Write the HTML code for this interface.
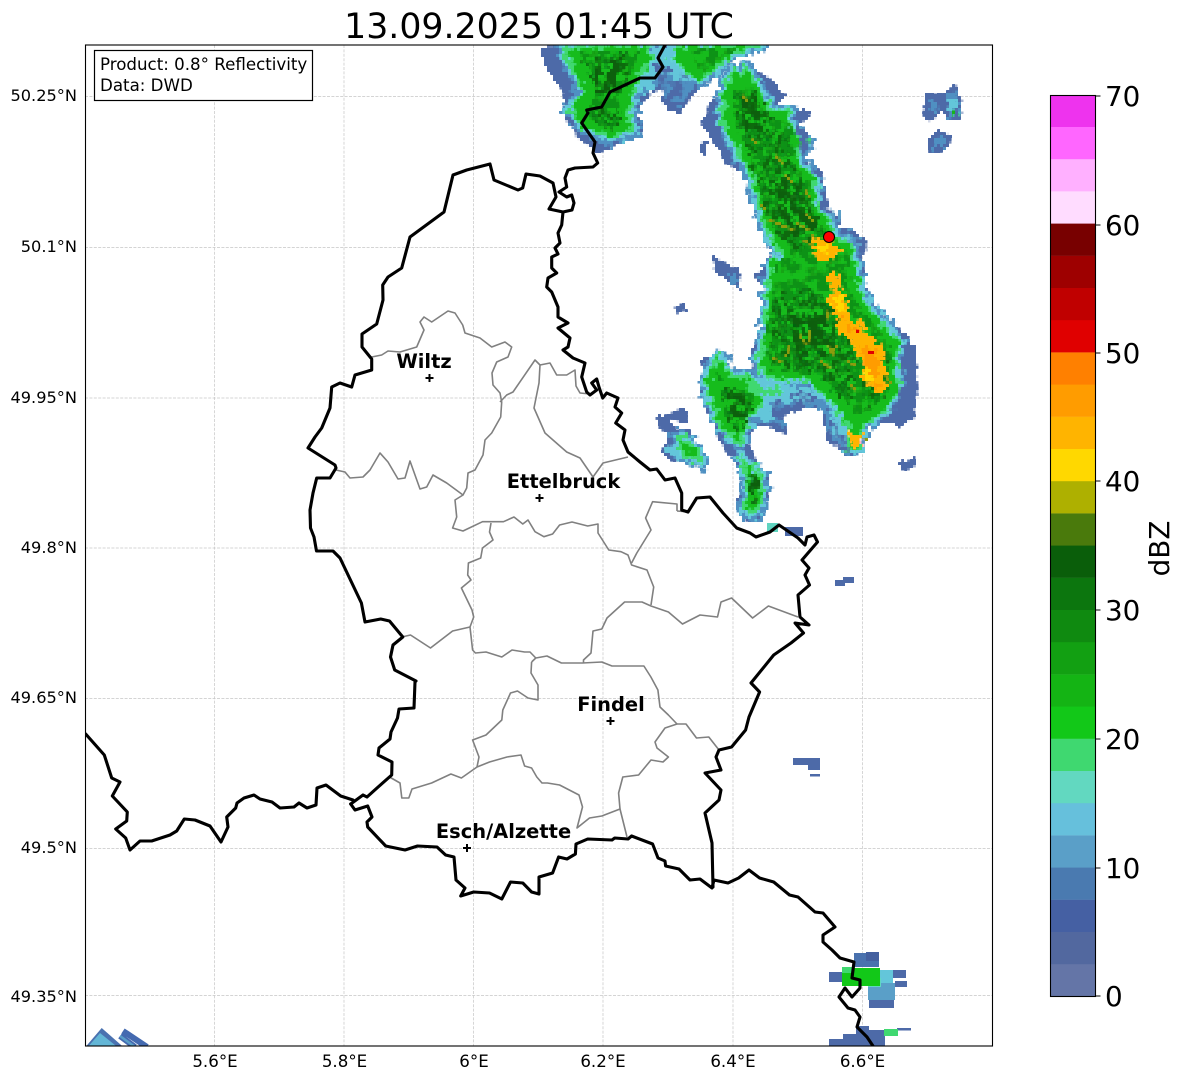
<!DOCTYPE html>
<html lang="en"><head><meta charset="utf-8"><title>13.09.2025 01:45 UTC</title>
<style>html,body{margin:0;padding:0;background:#fff;width:1184px;height:1081px;overflow:hidden}svg{display:block}text{font-family:"DejaVu Sans",sans-serif;fill:#000}</style></head>
<body>
<svg xmlns="http://www.w3.org/2000/svg" width="1184" height="1081" viewBox="0 0 1184 1081">
<defs>
<clipPath id="ax"><rect x="85.5" y="45" width="907" height="1001"/></clipPath>
<filter id="jag" filterUnits="userSpaceOnUse" x="85" y="45" width="908" height="1001">
<feTurbulence type="fractalNoise" baseFrequency="0.09" numOctaves="2" seed="4" result="n"/>
<feDisplacementMap in="SourceGraphic" in2="n" scale="9" xChannelSelector="R" yChannelSelector="G"/>
</filter>
<filter id="jag2" filterUnits="userSpaceOnUse" x="85" y="45" width="908" height="1001">
<feTurbulence type="fractalNoise" baseFrequency="0.13" numOctaves="3" seed="11" result="n"/>
<feDisplacementMap in="SourceGraphic" in2="n" scale="16" xChannelSelector="R" yChannelSelector="G"/>
</filter>
<filter id="jag3" filterUnits="userSpaceOnUse" x="85" y="45" width="908" height="1001">
<feTurbulence type="fractalNoise" baseFrequency="0.17" numOctaves="3" seed="23" result="n"/>
<feDisplacementMap in="SourceGraphic" in2="n" scale="14" xChannelSelector="G" yChannelSelector="R"/>
</filter>
<filter id="mott" filterUnits="userSpaceOnUse" x="85" y="45" width="908" height="1001">
<feTurbulence type="fractalNoise" baseFrequency="0.16" numOctaves="2" seed="9" result="n"/>
<feColorMatrix in="n" type="matrix" values="0 0 0 0 0 0 0 0 0 0 0 0 0 0 0 7 0 0 0 -3.1" result="t"/>
<feComposite in="SourceGraphic" in2="t" operator="in"/>
</filter>
<filter id="mott2" filterUnits="userSpaceOnUse" x="85" y="45" width="908" height="1001">
<feTurbulence type="fractalNoise" baseFrequency="0.11" numOctaves="3" seed="31" result="n"/>
<feColorMatrix in="n" type="matrix" values="0 0 0 0 0 0 0 0 0 0 0 0 0 0 0 7 0 0 0 -2.9" result="t"/>
<feComposite in="SourceGraphic" in2="t" operator="in"/>
</filter>
<filter id="px" filterUnits="userSpaceOnUse" primitiveUnits="userSpaceOnUse" x="85" y="45" width="908" height="1001">
<feFlood x="86" y="46" width="1" height="1" flood-color="#000"/>
<feComposite width="3" height="3"/>
<feTile result="a"/>
<feComposite in="SourceGraphic" in2="a" operator="in"/>
<feMorphology operator="dilate" radius="1"/>
</filter>
<g id="core">
<polygon points="730,75 747,68 763,95 770,110 790,112 790,128 808,142 795,158 815,178 816,202 826,215 837,238 851,242 856,265 860,285 865,302 878,317 900,342 896,360 899,390 890,405 878,418 863,423 860,447 848,450 848,427 837,410 827,397 807,380 767,380 758,360 765,337 767,300 770,262 783,255 773,242 760,212 750,172 740,158 722,122 722,95"/>
<polygon points="712,363 720,355 730,377 750,377 765,400 750,420 740,443 723,430 705,387"/>
<polygon points="740,457 763,477 762,493 757,513 743,510 747,493 747,477"/>
<polygon points="564,47 650,45 652,60 640,75 634,95 630,108 633,132 610,138 583,127 570,110 585,90 572,70"/>
<polygon points="680,45 763,45 735,53 712,72 700,82 685,70 672,60"/>
<polygon points="677,437 690,440 703,462 680,453"/>
</g>
</defs>
<rect width="1184" height="1081" fill="#fff"/>

<!-- grid -->
<g stroke="#c6c6c6" stroke-width="0.7" stroke-dasharray="3 1.4" fill="none">
<path d="M214.5 45V1046M344 45V1046M473.5 45V1046M603 45V1046M733 45V1046M862.5 45V1046"/>
<path d="M85 96.5H993M85 247.5H993M85 398H993M85 548H993M85 698.5H993M85 848.5H993M85 995.5H993"/>
</g>

<!-- radar -->
<g clip-path="url(#ax)">
<g filter="url(#px)">
<g filter="url(#jag)">
<g fill="#4d6aa8">
<polygon points="746,63 763,73 787,95 778,107 810,113 797,128 812,142 800,155 820,173 826,185 826,208 840,218 840,228 852,228 867,242 862,258 865,285 877,312 895,322 907,337 915,352 917,393 915,417 900,427 880,420 867,428 860,453 845,455 843,447 827,440 823,413 833,405 803,408 783,415 787,433 770,427 750,430 747,443 757,462 768,477 768,497 760,523 740,518 738,503 745,480 740,470 722,443 712,420 700,387 707,373 702,360 720,352 733,373 753,367 752,350 763,333 763,310 767,287 752,275 770,258 783,262 770,247 757,212 750,178 725,162 717,145 702,125 707,107 717,95 730,72"/>
<polygon points="543,45 763,47 733,55 717,75 693,95 680,115 668,108 660,98 663,85 655,90 633,112 645,128 623,142 600,152 583,143 567,122 563,92 550,75 540,55"/>
<polygon points="927,93 937,93 943,95 955,83 963,100 960,120 948,120 943,110 937,117 927,122 923,113 927,103"/>
<polygon points="938,129 952,138 947,148 930,153 928,142"/>
<polygon points="713,252 730,267 740,268 742,290 728,282 715,270"/>
<polygon points="702,143 708,142 703,155 698,153"/>
<polygon points="673,308 683,305 688,312 677,313"/>
<polygon points="657,417 680,409 688,412 687,423 672,420 673,430 690,430 705,462 698,465 683,457 675,462 660,452 670,437 658,423"/>
<polygon points="898,462 917,457 917,468 903,470"/>
</g>
</g>
<g filter="url(#jag3)">
<g fill="#4f90c2">
<polygon points="550,50 562,50 572,80 578,115 592,137 606,147 632,132 640,122 628,108 660,85 668,98 680,106 690,90 712,72 730,55 700,58 670,50"/>
<polygon points="735,378 770,378 830,398 826,412 800,404 782,412 785,428 770,422 752,425 745,440 730,420"/>
<polygon points="826,408 848,425 850,450 835,440 828,430"/>
<polygon points="945,97 955,90 960,105 955,116 948,115"/>
<polygon points="932,100 938,100 937,112 930,115"/>
<polygon points="935,135 947,140 942,147 934,148"/>
<polygon points="728,272 738,276 738,286 730,280"/>
</g>
</g>
<g filter="url(#jag2)">
<use href="#core" fill="#4f90c2" stroke="#4f90c2" stroke-width="13" stroke-linejoin="round"/>
<use href="#core" fill="#63c6da" stroke="#63c6da" stroke-width="8" stroke-linejoin="round"/>
<g fill="#63c6da">
<polygon points="650,47 682,47 700,74 688,82 672,78 662,70 645,95 640,70"/>
<polygon points="752,380 775,382 815,392 828,396 812,400 785,402 770,408 775,420 755,418 748,430"/>
<polygon points="830,412 845,430 842,440 832,435"/>
<polygon points="665,450 675,440 680,455 672,458"/>
<polygon points="948,100 954,98 956,110 950,110"/>
</g>
<use href="#core" fill="#14bc1c" stroke="#3fd870" stroke-width="3" stroke-linejoin="round"/>
</g>
<g filter="url(#jag3)">
<g fill="#3fd870">
<polygon points="765,388 780,386 782,394 768,396"/>
<polygon points="745,380 756,378 760,388 750,392"/>
</g>
<rect x="953" y="111" width="5" height="5" fill="#12b41a"/>
</g>
<!-- blue patches breaking up the cyan rim -->
<g filter="url(#mott2)">
<g fill="#4d6aa8">
<polygon points="652,62 672,68 690,78 682,98 668,104 660,88"/>
<polygon points="772,402 800,390 818,397 802,410 783,416 788,434 770,428"/>
<polygon points="828,418 846,430 850,454 834,447"/>
<polygon points="903,345 916,352 918,395 906,412 894,424 884,420 898,396"/>
<polygon points="798,122 814,142 802,157 792,140"/>
<polygon points="818,190 828,200 830,216 820,210"/>
</g>
</g>
<g filter="url(#mott2)">
<g fill="#0e9212">
<polygon points="733,84 752,86 768,120 790,122 800,145 792,160 810,180 812,205 822,222 832,245 848,250 855,300 892,347 888,393 872,410 855,415 845,400 820,375 770,372 764,340 772,300 775,265 790,252 768,212 755,170 735,130"/>
<polygon points="716,372 728,385 755,395 745,425 738,432 726,420"/>
<polygon points="578,52 640,50 628,85 620,100 622,125 605,130 585,115 600,85"/>
<polygon points="690,48 740,48 712,66 700,74"/>
</g>
</g>
<g filter="url(#jag3)">
<g fill="#0a6a10" filter="url(#mott)">
<polygon points="733,90 760,95 775,130 790,135 790,158 805,185 825,232 800,252 775,235 760,200 750,160 738,130"/>
<polygon points="770,298 812,285 850,325 858,375 850,405 810,372 772,368"/>
<polygon points="860,380 890,348 892,390 868,412"/>
<polygon points="718,385 742,390 755,408 740,438 728,420"/>
<polygon points="580,60 635,52 622,95 600,100"/>
<polygon points="592,110 620,110 622,130 600,130"/>
<polygon points="746,470 762,480 758,505 748,500"/>
</g>
</g>
<g filter="url(#mott2)">
<g fill="#0a5e0c">
<polygon points="740,96 757,96 762,128 745,128"/>
<polygon points="788,315 825,315 835,352 800,368"/>
<polygon points="782,178 802,188 818,228 795,238 776,205"/>
<polygon points="726,392 744,398 748,422 736,432"/>
<polygon points="750,476 761,480 758,502 749,498"/>
<polygon points="594,66 626,56 614,90 596,94"/>
</g>
</g>
<g stroke="#8c9c08" stroke-width="2" fill="none">
<path d="M775 155l8 8M786 175l6 8M760 205l6 4M768 220l12 4M780 225l14 5M795 222l14 8M806 215l8 6M803 240l16 8M812 235l12 8M805 190l4 7M742 95l6 6M752 140l6 4"/>
<path d="M810 330l-2 14M790 345l-4 12M772 358l10 4M830 352l8 -6M842 312l2 10M800 335l6 10M820 360l10 8M850 385l6 6M885 375l6 8M858 435l10 6M826 310l3 10M828 345l6 10M846 360l10 6"/>
</g>
<g filter="url(#jag3)">
<g fill="#ffb400">
<polygon points="826,297 838,288 848,303 850,320 863,323 868,337 884,348 884,363 887,380 885,394 873,392 871,382 858,379 868,365 858,357 851,339 838,334 836,313"/>
<polygon points="810,240 831,239 841,252 828,262 815,257"/>
<polygon points="826,273 841,274 843,288 829,289"/>
<polygon points="850,434 862,434 861,446 852,447"/>
</g>
<g fill="#ff9c00">
<polygon points="840,310 846,318 856,330 848,332"/>
<polygon points="860,343 878,352 880,375 870,380 864,365"/>
<polygon points="872,383 882,383 880,392"/>
</g>
<g fill="#ffd800">
<polygon points="832,296 842,296 844,312 838,310"/>
<polygon points="816,245 828,245 826,256"/>
<polygon points="860,372 872,368 870,382"/>
</g>
</g>
<g stroke="#e00000" stroke-width="4" fill="none"><path d="M856 330l4 2M869 353h6"/></g>
<g stroke="#5a9fc8" stroke-width="1.5" fill="none">
<path d="M843 236l20 2M845 240l16 5M838 226l2 -16M834 222l-2 -14M846 232l8 -5"/>
</g>
</g>

<!-- coarse rectangular echoes -->
<g fill="#4d6aa8">
<rect x="835" y="580" width="10" height="6"/><rect x="843" y="577" width="11" height="6"/>
<rect x="793" y="758" width="27" height="7"/><rect x="808" y="765" width="12" height="5"/><rect x="810" y="774" width="10" height="2.5"/>
<rect x="785" y="527" width="18" height="9"/>
<rect x="854" y="953" width="25" height="14" fill="#4a72ae"/><rect x="866" y="952" width="13" height="9" fill="#44609f"/>
<rect x="829" y="972" width="13" height="10"/><rect x="893" y="970" width="13" height="8"/><rect x="895" y="981" width="12" height="6"/>
<rect x="869" y="1000" width="25" height="8"/><rect x="856" y="1026" width="13" height="8"/>
<rect x="843" y="1034" width="42" height="12"/><rect x="829" y="1039" width="14" height="7"/><rect x="866" y="1030" width="19" height="6"/>
<rect x="897" y="1028" width="14" height="2.5"/>
</g>
<rect x="767" y="523" width="11" height="9" fill="#60d4c0"/>
<rect x="880" y="970" width="13" height="30" fill="#63c6da"/>
<rect x="868" y="983" width="27" height="17" fill="#5a9fc8"/>
<rect x="868" y="978" width="13" height="9" fill="#60d8c0"/>
<rect x="842" y="968" width="38" height="18" fill="#12c818"/>
<rect x="842" y="967" width="10" height="6" fill="#3fd870"/>
<rect x="884" y="1029" width="14" height="7" fill="#3fd870"/>
<polygon points="85.7,1046.7 101.7,1028 123,1046.7" fill="#4a72b0"/>
<polygon points="88,1046.7 100,1033 117,1046.7" fill="#63b6d6"/>
<path d="M123 1031l24 16M120 1036l15 11" stroke="#446ab0" stroke-width="6" fill="none"/>
<path d="M120 1036l15 11" stroke="#5a9fc8" stroke-width="2.5" fill="none"/>
</g>

<!-- region lines -->
<g clip-path="url(#ax)" fill="none" stroke="#808080" stroke-width="1.6" stroke-linejoin="round">
<polyline points="371.7,357 381.7,355 388,351 400,352 416.7,347 424,330 420,322 424,317 431.7,322 448,311 455,313 462.7,325 465,333 480,338 491.7,347 505,342 511.7,347 508,357 496.7,362 492,373 493,385 500,393 501.7,402 500.7,417 491.7,433 485,440 483,455 475,470 468,473 466.7,488 463,495"/>
<polyline points="336,470 345,472 350,478 363,477 370,470 380,453 388,462 398,479 405,478 410,461 420,489 426.7,487 433,475 446.7,483 463,495 455,500 456.7,517 452.6,528 463,531 482.5,521.7 503.5,521.7 514,517 522.8,524 528,520 535,531.7 543.9,536.7 552.6,534 559.6,525 572,522 587.7,526 598,524 598,533 608.8,550 621,551.7 628,555 631.6,565 647,570 653.7,587 651,605"/>
<polyline points="677,511 677,504 652.6,501.7 645.6,518 651,530 636.8,553 631.6,563"/>
<polyline points="677,511 686,511.7"/>
<polyline points="491,523 489.5,532 493,540 482.5,548 480.7,558 468.4,563 467.7,575 471,580 461.4,588 472,610 473.7,617 470,627 472.6,650 475.4,653 486,652 501.8,657 512,650 524.6,652 530,652 535.8,658"/>
<polyline points="401.8,637 410.5,635 430.5,648 452.6,631 470,627"/>
<polyline points="531.6,662 535.8,658 547,656 561.4,663 582.5,663 601.8,662 612,666 643.9,666 650.9,677 657.9,690 660,707 668.4,715 677,724"/>
<polyline points="583.5,663 583.5,660 591,653 593,631 601.8,629 607,618 624.6,602 642,602 651,606 668.4,612 682.5,624 700,615 717.5,617 721,602 731.6,598 752.6,618 768.4,606 798,617"/>
<polyline points="531.6,662 531,673 538,685 538,700 528,698 517.5,691 510.5,693 502.8,710 501.8,720 486,735 472.6,740 479,757 477,767"/>
<polyline points="389.5,777 400,783 401.8,798 408.8,798 412,789 431.6,783 450.9,774 461.4,778 477,767 489.5,762 507,757 521,755 524.6,766 531.6,768 536.8,777 542,783 547.4,783 559.6,785 579,795 582.5,807 577,828 589.5,818 601.8,816 620,809 627,837"/>
<polyline points="677,724 665,728 655,742 657,748 668.4,757 663,762 651,760 638.6,775 622.8,777 618.6,793 620,809"/>
<polyline points="677,724 686,724 696.5,738 708.8,737 719,750 715.8,757"/>
<polyline points="500,402 506.7,395 513,392 535,360 540,365 539,383 534,408 545,433 566.7,452 580,458 593,477 603,463 628,457"/>
<polyline points="540,365 550,363 556.7,375 566.7,375 575,370 576,386 580,393 590,394"/>
</g>

<!-- national borders -->
<g clip-path="url(#ax)" fill="none" stroke="#000" stroke-width="3.1" stroke-linejoin="round" stroke-linecap="round">
<polyline points="85.7,734 104.3,755 111.7,778 120,782 112.3,796 127.3,812 126.7,821 115.7,829 125.7,838 130,850 140,841 151.7,841 170,835 176.7,831 184.3,819 195,820 210,826 221,842 228,827 226.7,817 235.7,808 237,803 244,798 254,795 260,799 272,802 280,808 294,807 299,803 307,808 316,805 317,788 326,785 340.7,796 353,800"/>
<polyline points="350.7,804 363,795 367,797 377,788 391.7,775 392,762 378,755 379,748 390,739 391,732 397.5,718 399,709 414,708 415,682 416,681 394.7,670 390.5,657 393,645 402.8,637 389.5,621 380.7,619 365,622 361.4,603 340,558 333,551 316.5,551 314,537 310.5,528 310,510 313,493 316.7,478 330,478 336,468 335,465 308,448 315,437 321.7,428 330,408 331.7,387 340,383 351.7,387 355,375 371.7,370 371.7,359 362,347 362,334 376.7,324 383,300 382.7,285 388,277 401.7,268 410,237 444,212 453,175 466.7,170 490,164 494,180 518,190 522.7,188 526,174 540,176 553,183 556,197 549,209 563,212 572,210 574,203 571.7,195 566.7,197 559,192 566.7,187 565,178 568,170 575,168 593,167 597.7,163 593,153 595,142 581.7,123 588,113 586.7,110 601.7,107 610,92 640,78 655,78 663,67 658,58 665,45"/>
<polyline points="563,212 561.7,225 558,233 560,243 555,248 558,254 551.7,257 551.7,268 556.7,273 548,278 546.7,287 551.7,292 558,307 558,317 568,323 558,328 570,338 568,347 563,350 573,358 585,363 581.7,377 586.7,392 590,395 596.7,390 591.7,383 596.7,379 599,387 602.7,398 606.7,393 618,398 615,407 621.7,413 615.7,423 625,430 623,440 628,452 640,462 650,470 656.7,469 665,480 675,478 681.7,493 681.7,510 688,512 696.7,498 710,497 723,513 736.7,528 750,533 756,537 770,532 779,525 798,538 805,545 807,537 814,535 817.5,542 802,560 809,568 805,575 809.5,585 798,595 800,617 809,625 795,623 803.5,633 791,643 773.7,655 751,683 759.6,692 749,717 745.6,730 731.6,747 719,750 716,757 721,770 705,773 721,790 719,800 705,813 712,843 713,887"/>
<polyline points="350.7,804 355,810 367.7,806 372,817 367,822 367.7,827 385.7,846 405,850 417.5,846 437,847 445.6,855 454,857 456,880 465,888 460.7,896 473.7,892 489.5,893 501.8,899 510.5,882 522.8,883 531.6,892 539,894 539,877 552.6,873 558.6,857 567,859 575.4,854 576,844 587.7,839 612,840 614.7,838 628,839 631.6,836 652.6,844 658,858 665,861 665.6,866 679,869 690,880 700,879 712,888 714,880 728,883 738.6,878 749,870 759.6,878 773.7,882 789.5,895 798,897 815,912 823,913 835,927 823,935 823,942 832,950 840,958 854,962 852,978 860,980 860,988 852,997 845,988 839,997 848,1008 855,1010 860,1017 857,1027 867,1037 873,1046"/>
</g>

<!-- city markers -->
<g stroke="#000" stroke-width="2" fill="none">
<path d="M425.5 378h8M429.5 374v8"/>
<path d="M535.5 498h8M539.5 494v8"/>
<path d="M606.5 721h8M610.5 717v8"/>
<path d="M463 848h8M467 844v8"/>
</g>
<g font-size="19.44" font-weight="700" text-anchor="middle">
<text x="424" y="368">Wiltz</text>
<text x="563.5" y="488">Ettelbruck</text>
<text x="611" y="711">Findel</text>
<text x="503.5" y="838">Esch/Alzette</text>
</g>
<circle cx="829" cy="237" r="5.5" fill="#f00" stroke="#000" stroke-width="1"/>

<!-- frame -->
<rect x="85.5" y="45" width="907" height="1001" fill="none" stroke="#000" stroke-width="1.1"/>

<!-- info box -->
<rect x="94.5" y="50.5" width="218" height="50" fill="#fff" stroke="#000" stroke-width="1.2"/>
<text x="100" y="70" font-size="16.67">Product: 0.8° Reflectivity</text>
<text x="100" y="91" font-size="16.67">Data: DWD</text>

<!-- title -->
<text x="539" y="38" font-size="34.72" text-anchor="middle">13.09.2025 01:45 UTC</text>

<!-- axis labels -->
<g font-size="16.2" text-anchor="end">
<text x="77" y="101">50.25°N</text>
<text x="77" y="252">50.1°N</text>
<text x="77" y="403">49.95°N</text>
<text x="77" y="553">49.8°N</text>
<text x="77" y="703">49.65°N</text>
<text x="77" y="853">49.5°N</text>
<text x="77" y="1002">49.35°N</text>
</g>
<g font-size="16.67" text-anchor="middle">
<text x="215" y="1067">5.6°E</text>
<text x="344.5" y="1067">5.8°E</text>
<text x="474" y="1067">6°E</text>
<text x="603" y="1067">6.2°E</text>
<text x="733" y="1067">6.4°E</text>
<text x="862.5" y="1067">6.6°E</text>
</g>

<!-- colorbar -->
<g>
<rect x="1050.5" y="964" width="45" height="32.5" fill="#6475a7"/>
<rect x="1050.5" y="931.8" width="45" height="32.4" fill="#52689f"/>
<rect x="1050.5" y="899.6" width="45" height="32.4" fill="#4560a3"/>
<rect x="1050.5" y="867.4" width="45" height="32.4" fill="#4a7ab0"/>
<rect x="1050.5" y="835.2" width="45" height="32.4" fill="#5a9fc8"/>
<rect x="1050.5" y="803" width="45" height="32.4" fill="#66c0dc"/>
<rect x="1050.5" y="770.8" width="45" height="32.4" fill="#62d8c0"/>
<rect x="1050.5" y="738.6" width="45" height="32.4" fill="#3fd870"/>
<rect x="1050.5" y="706.4" width="45" height="32.4" fill="#12c818"/>
<rect x="1050.5" y="674.2" width="45" height="32.4" fill="#14b414"/>
<rect x="1050.5" y="642" width="45" height="32.4" fill="#12a012"/>
<rect x="1050.5" y="609.8" width="45" height="32.4" fill="#0f8a10"/>
<rect x="1050.5" y="577.6" width="45" height="32.4" fill="#0c760e"/>
<rect x="1050.5" y="545.4" width="45" height="32.4" fill="#0a5e0a"/>
<rect x="1050.5" y="513.2" width="45" height="32.4" fill="#4a7a0c"/>
<rect x="1050.5" y="481" width="45" height="32.4" fill="#aeb000"/>
<rect x="1050.5" y="448.8" width="45" height="32.4" fill="#ffd800"/>
<rect x="1050.5" y="416.6" width="45" height="32.4" fill="#ffb400"/>
<rect x="1050.5" y="384.4" width="45" height="32.4" fill="#ff9c00"/>
<rect x="1050.5" y="352.2" width="45" height="32.4" fill="#ff8000"/>
<rect x="1050.5" y="320" width="45" height="32.4" fill="#e00000"/>
<rect x="1050.5" y="287.8" width="45" height="32.4" fill="#c00000"/>
<rect x="1050.5" y="255.6" width="45" height="32.4" fill="#9e0000"/>
<rect x="1050.5" y="223.4" width="45" height="32.4" fill="#780000"/>
<rect x="1050.5" y="191.2" width="45" height="32.4" fill="#ffdcff"/>
<rect x="1050.5" y="159" width="45" height="32.4" fill="#ffb0ff"/>
<rect x="1050.5" y="126.8" width="45" height="32.4" fill="#ff66ff"/>
<rect x="1050.5" y="95.5" width="45" height="31.5" fill="#ee33ee"/>
<rect x="1050.5" y="95.5" width="45" height="901" fill="none" stroke="#000" stroke-width="1.1"/>
<path d="M1095.5 96h5M1095.5 225h5M1095.5 353h5M1095.5 481h5M1095.5 610h5M1095.5 739h5M1095.5 868h5M1095.5 996h5" stroke="#000" stroke-width="1.1"/>
</g>
<g font-size="27.78">
<text x="1105" y="106">70</text>
<text x="1105" y="235">60</text>
<text x="1105" y="363">50</text>
<text x="1105" y="491">40</text>
<text x="1105" y="620">30</text>
<text x="1105" y="749">20</text>
<text x="1105" y="878">10</text>
<text x="1105" y="1006">0</text>
</g>
<text transform="translate(1169 548.5) rotate(-90)" font-size="27.78" text-anchor="middle">dBZ</text>
</svg>
</body></html>
